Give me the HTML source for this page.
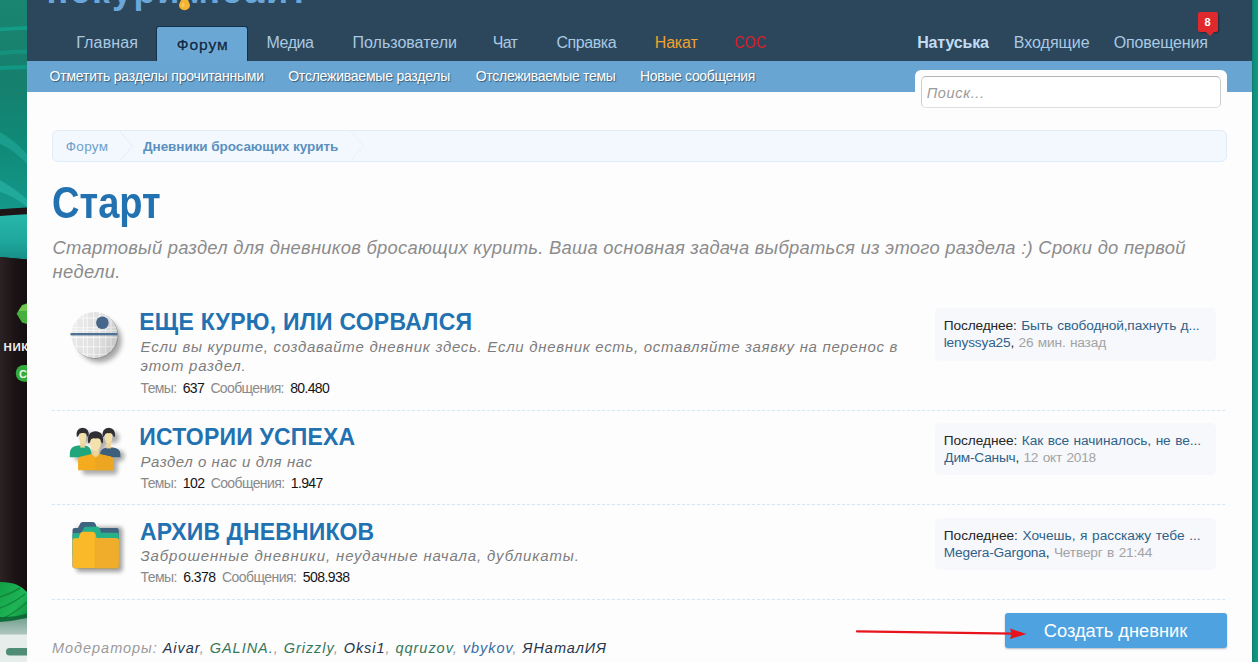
<!DOCTYPE html>
<html lang="ru">
<head>
<meta charset="utf-8">
<title>Старт | Форум</title>
<style>

*{margin:0;padding:0;box-sizing:border-box}
html,body{width:1258px;height:662px;overflow:hidden}
body{position:relative;font-family:'Liberation Sans',sans-serif;background:#14977f}
a{color:inherit;text-decoration:none}
.tx{position:absolute;white-space:nowrap;display:block}
.stats{word-spacing:3px}
.stats b{font-weight:normal;color:#141414}
.lp{word-spacing:.8px}
.lp a{color:#2f6289}
.lp i{font-style:normal;color:#a3a3a3}
.mods .m1{color:#27364a}
.mods .m2{color:#35785a}
.mods .m3{color:#3a6c9e}

.abs{position:absolute}
#bgL{left:0;top:0;width:27px;height:662px;overflow:hidden}
#bgR{left:1252px;top:0;width:6px;height:662px;background:linear-gradient(90deg,#0e7d69 0,#0f8f7c 2px,#0f9986 100%)}
#page{left:27px;top:0;width:1225px;height:662px;background:#fdfdfe}
#head{left:27px;top:0;width:1225px;height:61px;background:#2c475c}
#logo{left:46.5px;top:-30.2px;width:270px;height:42px;overflow:hidden;font-size:36px;line-height:42px;font-weight:bold;color:#6aa6d9;letter-spacing:1.9px;white-space:nowrap}
#tab{left:156px;top:26px;width:92px;height:35px;background:#6ba7d5;border-radius:3px 3px 0 0;border:1px solid #12324c;border-bottom:0}
#subnav{left:27px;top:60.75px;width:1225px;height:30.75px;background:#69a5d3}
#sbox{left:914.5px;top:70px;width:312px;height:45px;background:#fdfdfe;border-radius:6px 6px 0 0}
#sinp{left:921px;top:76px;width:299.5px;height:31.5px;background:#fff;border:1px solid #cdcdcd;border-top-color:#b4b4b4;border-bottom-color:#dedede;border-radius:5px}
#crumbs{left:52px;top:130px;width:1174.5px;height:31.5px;background:#f2f8fd;border:1px solid #e0ecf7;border-radius:6px}
#title{left:52px;top:173.26px;font-size:44.7px;line-height:60px;font-weight:bold;color:#2271b1;transform-origin:0 0;transform:scaleX(.852);white-space:nowrap}
.sep{left:52px;width:1174px;height:1px;background:repeating-linear-gradient(90deg,#d3e8f6 0,#d3e8f6 3px,transparent 3px,transparent 5px)}
.lpbox{left:935px;width:280.5px;height:52.5px;background:#f7f8fb;border-radius:5px}
#btn{left:1005px;top:613px;width:221.5px;height:34.5px;background:#4da2df;border-radius:3px;box-shadow:0 1px 2px rgba(40,60,90,.35)}
#badge{left:1197.5px;top:12px;width:20px;height:20px;background:#e0292c;border-radius:2px;box-shadow:1px 1px 2px rgba(0,0,0,.35)}
#badge:after{content:"";position:absolute;left:8px;top:20px;border:4px solid transparent;border-top:4px solid #e0292c;border-bottom:0}
svg{position:absolute;display:block;overflow:visible}
</style>
</head>
<body>
<!-- side background art -->
<svg id="bgL" class="abs" width="27" height="662" viewBox="0 0 27 662">
  <defs>
    <linearGradient id="gt" x1="0" y1="0" x2="0" y2="1"><stop offset="0" stop-color="#1a8571"/><stop offset=".12" stop-color="#167f6d"/><stop offset=".22" stop-color="#108a78"/><stop offset=".32" stop-color="#14988a"/></linearGradient>
    <linearGradient id="gd" x1="0" y1="0" x2="1" y2="0"><stop offset="0" stop-color="#2c2224"/><stop offset=".55" stop-color="#1b1315"/><stop offset="1" stop-color="#140e10"/></linearGradient>
    <linearGradient id="gb" x1="0" y1="0" x2="0" y2="1"><stop offset="0" stop-color="#27b7aa"/><stop offset=".6" stop-color="#1fa79c"/><stop offset="1" stop-color="#168f87"/></linearGradient>
    <linearGradient id="gl" x1="0" y1="0" x2="1" y2="1"><stop offset="0" stop-color="#12a046"/><stop offset=".6" stop-color="#1fb455"/><stop offset="1" stop-color="#0f8c3c"/></linearGradient>
    <linearGradient id="gr" x1="0" y1="0" x2="0" y2="1"><stop offset="0" stop-color="#6f9f8d"/><stop offset="1" stop-color="#b7cbc4"/></linearGradient>
  </defs>
  <rect width="27" height="662" fill="url(#gt)"/>
  <path d="M0 29.5 Q14 28.5 27 28" stroke="#10a590" stroke-width="3.5" fill="none" opacity=".8"/>
  <path d="M0 53 Q14 52 27 51.5" stroke="#12a08c" stroke-width="4" fill="none" opacity=".55"/>
  <path d="M0 68 Q14 67.5 27 67" stroke="#0f9d8a" stroke-width="4" fill="none" opacity=".8"/>
  <path d="M0 132 Q14 140 27 154 L27 164 Q14 150 0 144Z" fill="#22ad9c" opacity=".55"/>
  <path d="M0 180 Q14 188 27 199 L27 207 Q14 196 0 192Z" fill="#2cb8aa" opacity=".6"/>
  <path d="M0 209.3 Q14 208 27 207.5 L27 662 L0 662Z" fill="#1e1516"/>
  <path d="M0 216 Q14 215 27 214.2 L27 259.5 Q14 258 0 257Z" fill="url(#gb)"/>
  <path d="M0 257 Q14 258 27 259.5 L27 600 L0 600Z" fill="url(#gd)"/>
  <path d="M16.6 313.7 L22 305 L27 303.3 L27 324 L22 322.6Z" fill="#46b03c"/>
  <path d="M18.5 311 L22.5 305.5 L27 304 L27 311Z" fill="#78cf52" opacity=".8"/>
  <rect x="15.8" y="365" width="20" height="16.7" rx="8" fill="#33aa3c"/>
  <text x="19" y="378" font-family="'Liberation Sans',sans-serif" font-size="11" font-weight="bold" fill="#e8f5e4">С</text>
  <text x="3.6" y="351" font-family="'Liberation Sans',sans-serif" font-size="11.5" font-weight="bold" fill="#eeeeee" letter-spacing=".5">НИК</text>
  <path d="M0 621 L27 617 L27 636 L0 636Z" fill="url(#gr)"/>
  <path d="M0 634.6 L27 634.6 L27 662 L0 662Z" fill="#e7edeb"/>
  <path d="M0 582 Q10 582 17 584.7 Q23 587.5 27 592 L27 617.5 Q14 620 0 621.5Z" fill="url(#gl)"/>
  <path d="M0 597 Q12 593 20 588 M0 608 Q14 603 25 594 M4 618 Q18 611 27 602" stroke="#0b7a35" stroke-width="1.6" fill="none" opacity=".7"/>
  <path d="M0 617 Q14 617.5 27 613.5 L27 618 Q14 621 0 622Z" fill="#0a5a30" opacity=".75"/>
  <rect x="6" y="648" width="24" height="7.5" rx="3.5" fill="#3f8269" opacity=".9"/>
</svg>
<div id="bgR" class="abs"></div>

<div id="page" class="abs"></div>

<header>
  <div id="head" class="abs"></div>
  <div id="logo" class="abs">некурим.сайт</div>
  <svg style="left:176px;top:0" width="18" height="14" viewBox="0 0 18 14"><path d="M8.5 -5 C8.5 -5 3 2.5 3 5.2 A5.5 5 0 0 0 14 5.2 C14 2.5 8.5 -5 8.5 -5Z" fill="#f3b431"/><ellipse cx="7" cy="5" rx="1.6" ry="2.4" fill="#f9cf6a" opacity=".7"/></svg>
  <div id="tab" class="abs"></div>
  <nav>
<a class="tx nav" style="left:76.20px;top:33.46px;font-size:16px;line-height:20px;color:#a9c9e3;letter-spacing:0.150px;">Главная</a>
<a class="tx nav sel" style="left:176.70px;top:35.03px;font-size:15.5px;line-height:20px;color:#0e2a47;letter-spacing:0.990px;-webkit-text-stroke:.4px #0e2a47;text-shadow:0 0 2px rgba(190,220,245,.8);">Форум</a>
<a class="tx nav" style="left:266.50px;top:33.46px;font-size:16px;line-height:20px;color:#a9c9e3;letter-spacing:-0.450px;">Медиа</a>
<a class="tx nav" style="left:352.50px;top:33.46px;font-size:16px;line-height:20px;color:#a9c9e3;">Пользователи</a>
<a class="tx nav" style="left:492.75px;top:33.46px;font-size:16px;line-height:20px;color:#a9c9e3;letter-spacing:-0.675px;">Чат</a>
<a class="tx nav" style="left:556.50px;top:33.46px;font-size:16px;line-height:20px;color:#a9c9e3;letter-spacing:-0.450px;">Справка</a>
<a class="tx nav" style="left:654.75px;top:33.46px;font-size:16px;line-height:20px;color:#f0a12f;letter-spacing:-0.169px;">Накат</a>
<a class="tx nav" style="left:734.75px;top:33.46px;font-size:16px;line-height:20px;color:#e3202b;letter-spacing:0.675px;transform:scaleX(.87);transform-origin:0 50%;">СОС</a>
<a class="tx nav" style="left:917.20px;top:33.46px;font-size:16px;line-height:20px;color:#c3dcf2;font-weight:bold;letter-spacing:-0.161px;">Натуська</a>
<a class="tx nav" style="left:1013.75px;top:33.46px;font-size:16px;line-height:20px;color:#a9c9e3;">Входящие</a>
<a class="tx nav" style="left:1113.75px;top:33.46px;font-size:16px;line-height:20px;color:#a9c9e3;letter-spacing:-0.150px;">Оповещения</a>
  </nav>
  <div id="badge" class="abs"></div>
<span class="tx bdg" style="left:1204.50px;top:12.19px;font-size:11px;line-height:20px;color:#ffffff;font-weight:bold;">8</span>
  <div id="subnav" class="abs"></div>
  <nav>
<a class="tx sub" style="left:49.50px;top:66.40px;font-size:14px;line-height:20px;color:#ffffff;letter-spacing:-0.201px;text-shadow:1px 1px 1px rgba(0,0,0,.45);">Отметить разделы прочитанными</a>
<a class="tx sub" style="left:288.20px;top:66.40px;font-size:14px;line-height:20px;color:#ffffff;letter-spacing:-0.225px;text-shadow:1px 1px 1px rgba(0,0,0,.45);">Отслеживаемые разделы</a>
<a class="tx sub" style="left:475.75px;top:66.40px;font-size:14px;line-height:20px;color:#ffffff;letter-spacing:-0.291px;text-shadow:1px 1px 1px rgba(0,0,0,.45);">Отслеживаемые темы</a>
<a class="tx sub" style="left:640.05px;top:66.40px;font-size:14px;line-height:20px;color:#ffffff;letter-spacing:-0.338px;text-shadow:1px 1px 1px rgba(0,0,0,.45);">Новые сообщения</a>
  </nav>
  <div id="sbox" class="abs"></div>
  <div id="sinp" class="abs"></div>
<span class="tx ph" style="left:926.70px;top:82.78px;font-size:14.5px;line-height:20px;color:#9b9b9b;font-style:italic;letter-spacing:0.643px;">Поиск...</span>
</header>

<main>
  <div id="crumbs" class="abs"></div>
  <svg style="left:52px;top:130px" width="330" height="32" viewBox="0 0 330 32">
    <path d="M67.5 1 L80.5 16 L67.5 31" fill="none" stroke="#e3eef8" stroke-width="1"/>
        <path d="M298.5 1 L311.5 16 L298.5 31" fill="none" stroke="#eaf2f9" stroke-width="1"/>
  </svg>
<a class="tx crumb" style="left:65.80px;top:137.22px;font-size:13.5px;line-height:20px;color:#6e9fca;letter-spacing:0.292px;">Форум</a>
<a class="tx crumb" style="left:143.00px;top:137.22px;font-size:13.5px;line-height:20px;color:#5b90bf;font-weight:bold;letter-spacing:-0.060px;">Дневники бросающих курить</a>
  <h1 id="title" class="abs">Старт</h1>
<span class="tx desc" style="left:52.50px;top:237.62px;font-size:18.4px;line-height:20px;color:#8c8c8c;font-style:italic;letter-spacing:0.261px;">Стартовый раздел для дневников бросающих курить. Ваша основная задача выбраться из этого раздела :) Сроки до первой</span>
<span class="tx desc" style="left:52.50px;top:261.62px;font-size:18.4px;line-height:20px;color:#8c8c8c;font-style:italic;letter-spacing:0.375px;">недели.</span>

  <!-- node 1 -->
  <svg style="left:66px;top:307px" width="64" height="64" viewBox="0 0 64 64">
    <defs>
      <filter id="ds" x="-30%" y="-30%" width="170%" height="170%"><feGaussianBlur stdDeviation="2.5"/></filter>
      <clipPath id="cp"><circle cx="28.5" cy="28" r="23"/></clipPath>
      <linearGradient id="sg" x1="0" y1="0" x2="1" y2=".35"><stop offset="0" stop-color="#fff" stop-opacity=".45"/><stop offset=".5" stop-color="#fff" stop-opacity="0"/><stop offset="1" stop-color="#000" stop-opacity=".1"/></linearGradient>
    </defs>
    <circle cx="33.5" cy="33.5" r="22" fill="#000" opacity=".34" filter="url(#ds)"/>
    <circle cx="29.3" cy="28.8" r="23" fill="#8f8f8f"/>
    <circle cx="28.5" cy="28" r="23" fill="#e2e2e2"/>
    <g clip-path="url(#cp)" stroke="#f7f7f7" stroke-width="1">
      <path d="M10.3 0V60M17.4 0V60M21.2 0V60M27.7 0V60M33.7 0V60M39.7 0V60M45.1 0V60"/>
      <path d="M0 11H60M0 20.7H60M0 23.4H60M0 30.5H60M0 39.7H60M0 47.3H60"/>
    </g>
    <circle cx="28.5" cy="28" r="23" fill="url(#sg)"/>
    <rect x="4.5" y="26" width="47" height="2.4" fill="#4f7193"/>
    <circle cx="36.4" cy="15.8" r="6.3" fill="#47678a"/>
  </svg>
<a class="tx ntitle" style="left:139.30px;top:307.03px;font-size:23px;line-height:30px;color:#2271b1;font-weight:bold;letter-spacing:0.236px;">ЕЩЕ КУРЮ, ИЛИ СОРВАЛСЯ</a>
<a class="tx ntitle" style="left:139.30px;top:422.03px;font-size:23px;line-height:30px;color:#2271b1;font-weight:bold;letter-spacing:0.173px;">ИСТОРИИ УСПЕХА</a>
<a class="tx ntitle" style="left:140.00px;top:517.03px;font-size:23px;line-height:30px;color:#2271b1;font-weight:bold;letter-spacing:0.113px;">АРХИВ ДНЕВНИКОВ</a>
<span class="tx ndesc" style="left:140.50px;top:336.80px;font-size:15px;line-height:20px;color:#7d7d7d;font-style:italic;letter-spacing:0.690px;">Если вы курите, создавайте дневник здесь. Если дневник есть, оставляйте заявку на перенос в</span>
<span class="tx ndesc" style="left:140.50px;top:356.20px;font-size:15px;line-height:20px;color:#7d7d7d;font-style:italic;letter-spacing:0.777px;">этот раздел.</span>
<span class="tx ndesc" style="left:140.50px;top:451.80px;font-size:15px;line-height:20px;color:#7d7d7d;font-style:italic;letter-spacing:0.557px;">Раздел о нас и для нас</span>
<span class="tx ndesc" style="left:140.50px;top:546.20px;font-size:15px;line-height:20px;color:#7d7d7d;font-style:italic;letter-spacing:0.863px;">Заброшенные дневники, неудачные начала, дубликаты.</span>
<span class="tx stats" style="left:140.50px;top:378.15px;font-size:14px;line-height:20px;color:#8a8a8a;letter-spacing:-0.640px;">Темы: <b>637</b> Сообщения: <b>80.480</b></span>
<span class="tx stats" style="left:140.50px;top:473.15px;font-size:14px;line-height:20px;color:#8a8a8a;letter-spacing:-0.612px;">Темы: <b>102</b> Сообщения: <b>1.947</b></span>
<span class="tx stats" style="left:140.50px;top:567.15px;font-size:14px;line-height:20px;color:#8a8a8a;letter-spacing:-0.543px;">Темы: <b>6.378</b> Сообщения: <b>508.938</b></span>
  <div class="abs sep" style="top:410px"></div>
  <div class="abs sep" style="top:504px"></div>
  <div class="abs sep" style="top:599px"></div>

  <!-- node 2 icon: people -->
  <svg style="left:66px;top:422px" width="64" height="64" viewBox="0 0 64 64">
    <defs><filter id="ds2" x="-30%" y="-30%" width="170%" height="170%"><feGaussianBlur stdDeviation="2.2"/></filter></defs>
    <g opacity=".32" filter="url(#ds2)" transform="translate(4.5,4.5)">
      <rect x="4" y="24" width="50" height="11" rx="5"/><rect x="12" y="32" width="35" height="16" rx="3"/>
      <circle cx="16.6" cy="11" r="6"/><circle cx="42.7" cy="11" r="6"/><circle cx="29.5" cy="16" r="7.5"/>
    </g>
    <!-- left person -->
    <path d="M3.8 35.3 L3.8 31 Q4 24.6 12 23.6 L19 23.6 Q25 24.6 25.2 31 L25.2 35.3Z" fill="#1fa67a"/>
    <rect x="14.3" y="18" width="4.6" height="7.6" fill="#ecd59c"/>
    <ellipse cx="16.6" cy="15.4" rx="3.6" ry="6" fill="#f3dfa8"/>
    <path d="M10.7 14.6 Q9.6 6 16.6 5.7 Q23.8 6 22.6 14.6 Q21.6 15.2 20.8 13.4 Q20.6 10.4 16.8 11 Q13 10.4 12.6 13.4 Q11.8 15.2 10.7 14.6Z" fill="#2f2f33"/>
    <!-- right person -->
    <path d="M34 35.3 L34 32 Q34.4 26.2 41 25.4 L47 25.4 Q54.2 26.2 54.4 32 L54.4 35.3Z" fill="#3d5f7c"/>
    <rect x="40.4" y="18" width="4.6" height="8.4" fill="#ecd59c"/>
    <ellipse cx="42.6" cy="15.6" rx="3.7" ry="6" fill="#f3dfa8"/>
    <path d="M36.6 14.8 Q35.6 6 42.7 5.7 Q50 6 48.9 14.8 Q47.8 15.4 47 13.6 Q46.6 10.6 42.8 11.2 Q39 10.6 38.6 13.6 Q37.8 15.4 36.6 14.8Z" fill="#2f2f33"/>
    <!-- centre person -->
    <path d="M12.1 48.2 L12.1 38 Q12.1 35.2 15 34.6 L26 32 L33 32 L44.4 34.6 Q47.2 35.2 47.2 38 L47.2 48.2Z" fill="#f4ab1e"/>
    <path d="M29.6 32 L33 32 L44.4 34.6 Q47.2 35.2 47.2 38 L47.2 48.2 L29.6 48.2Z" fill="#eca622"/>
    <path d="M26.6 26 L32.6 26 L33 32.4 L29.7 35.6 L26.2 32.4Z" fill="#ecd59c"/>
    <ellipse cx="29.5" cy="21.4" rx="5.4" ry="7.6" fill="#f5e1ab"/>
    <path d="M22.2 21 Q20.6 9.6 29.5 9.2 Q38.4 9.6 36.9 21 Q35.8 21.8 35 19.6 Q34.6 15.6 29.6 16.4 Q24.6 15.6 24.2 19.6 Q23.4 21.8 22.2 21Z" fill="#2f2f33"/>
  </svg>

  <!-- node 3 icon: folders -->
  <svg style="left:66px;top:516px" width="64" height="64" viewBox="0 0 64 64">
    <defs><filter id="ds3" x="-30%" y="-30%" width="170%" height="170%"><feGaussianBlur stdDeviation="2.2"/></filter></defs>
    <rect x="10.5" y="11" width="46" height="45" rx="3" opacity=".36" filter="url(#ds3)"/>
    <path d="M6.5 14 Q6.5 12 8.5 12 L12 12 L14 8 Q14.6 6 16.6 6 L26.8 6 Q28.8 6 29.6 8 L31 12 L50.7 12 Q52.7 12 52.7 14 L52.7 50 Q52.7 52.2 50.7 52.2 L8.5 52.2 Q6.5 52.2 6.5 50Z" fill="#3f6480"/>
    <path d="M6.5 19 Q6.5 17 8.5 17 L15.6 17 L17.5 12.6 Q18.2 10.8 20.2 10.8 L31.3 10.8 Q33.2 10.8 33.8 12.6 L35 16.8 L50.7 16.8 Q52.7 16.8 52.7 19 L52.7 40 L6.5 40Z" fill="#27b18a"/>
    <path d="M6.5 24.3 Q6.5 22.3 8.5 22.3 L12.6 22.3 L14.2 17.6 Q14.8 15.7 16.8 15.7 L26.6 15.7 Q28.6 15.7 29.2 17.6 L30.5 22.3 L50.7 22.3 Q52.7 22.3 52.7 24.3 L52.7 50 Q52.7 52.2 50.7 52.2 L8.5 52.2 Q6.5 52.2 6.5 50Z" fill="#f9b928"/>
    <path d="M28.8 16.6 Q29 17 29.2 17.6 L30.5 22.3 L50.7 22.3 Q52.7 22.3 52.7 24.3 L52.7 50 Q52.7 52.2 50.7 52.2 L28.8 52.2Z" fill="#efad2b"/>
  </svg>

  <div class="abs lpbox" style="top:308px"></div>
  <div class="abs lpbox" style="top:422.5px"></div>
  <div class="abs lpbox" style="top:517.5px"></div>
<span class="tx lp" style="left:943.75px;top:316.25px;font-size:13.7px;line-height:20px;color:#262626;letter-spacing:-0.128px;">Последнее: <a>Быть свободной,пахнуть д...</a></span>
<span class="tx lp" style="left:943.75px;top:333.00px;font-size:13.7px;line-height:20px;color:#262626;letter-spacing:-0.178px;"><a>lenyssya25</a>, <i>26 мин. назад</i></span>
<span class="tx lp" style="left:943.75px;top:431.25px;font-size:13.7px;line-height:20px;color:#262626;letter-spacing:-0.071px;">Последнее: <a>Как все начиналось, не ве...</a></span>
<span class="tx lp" style="left:944.35px;top:448.25px;font-size:13.7px;line-height:20px;color:#262626;letter-spacing:-0.214px;"><a>Дим-Саныч</a>, <i>12 окт 2018</i></span>
<span class="tx lp" style="left:943.75px;top:526.25px;font-size:13.7px;line-height:20px;color:#262626;">Последнее: <a>Хочешь, я расскажу тебе ...</a></span>
<span class="tx lp" style="left:943.75px;top:543.00px;font-size:13.7px;line-height:20px;color:#262626;letter-spacing:-0.158px;"><a>Megera-Gargona</a>, <i>Четверг в 21:44</i></span>

<span class="tx mods" style="left:52.00px;top:637.58px;font-size:14.5px;line-height:20px;color:#9a9a9a;font-style:italic;letter-spacing:0.963px;">Модераторы: <a class="m1">Aivar</a>, <a class="m2">GALINA.</a>, <a class="m2">Grizzly</a>, <a class="m1">Oksi1</a>, <a class="m2">qqruzov</a>, <a class="m3">vbykov</a>, <a class="m1">ЯНаталИЯ</a></span>

  <div id="btn" class="abs"></div>
  <!-- red arrow annotation -->
  <svg style="left:850px;top:620px" width="190" height="30" viewBox="0 0 190 30">
    <path d="M7 11.4 L164 13.7" stroke="#e8141c" stroke-width="2.2" stroke-linecap="round" fill="none"/>
    <path d="M160 8.6 L176.4 14 L160 19 Q162.5 13.8 160 8.6Z" fill="#e8141c"/>
  </svg>
<span class="tx btnt" style="left:1043.75px;top:620.66px;font-size:18.3px;line-height:20px;color:#ffffff;">Создать дневник</span>
</main>
</body>
</html>
